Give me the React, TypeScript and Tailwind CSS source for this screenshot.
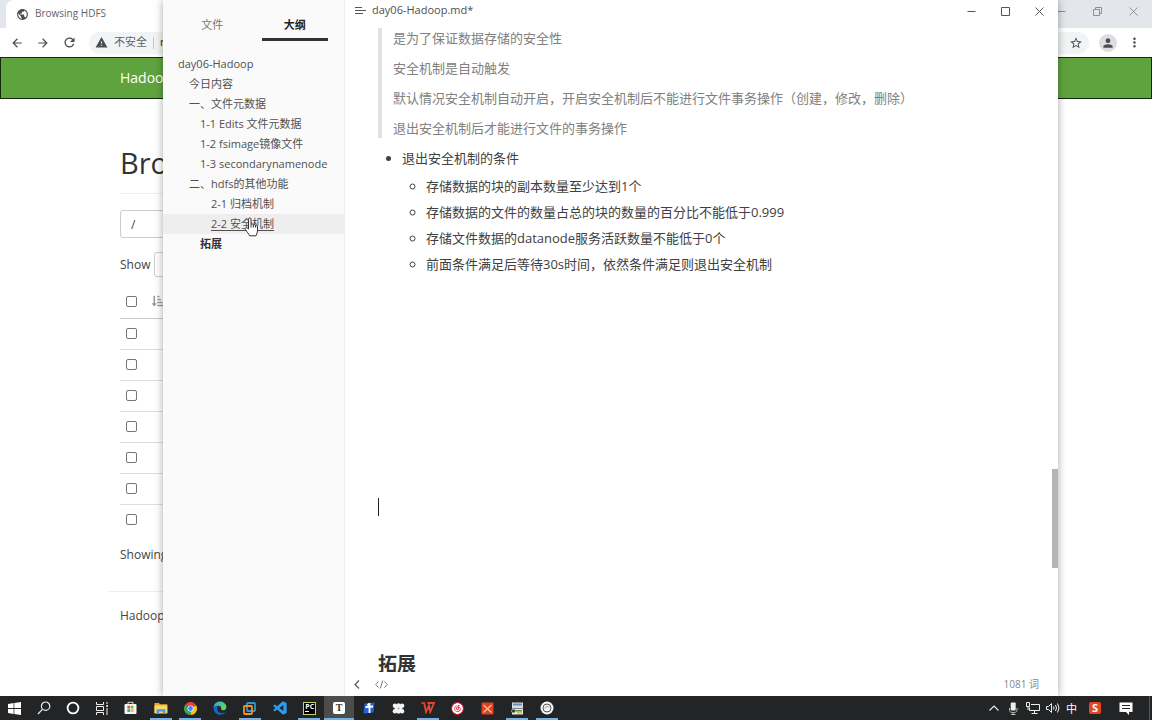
import React, { useState } from 'react';
import { MdArrowBack, MdArrowForward, MdRefresh, MdWarning, MdStarBorder, MdPerson, MdMoreVert, MdPublic } from 'react-icons/md';
import { FaSortAmountDownAlt } from 'react-icons/fa';
import { BiLogoVisualStudio } from 'react-icons/bi';
import { SiNeteasecloudmusic } from 'react-icons/si';

interface OutlineItem {
  text: string;
  indent: string;
  bold?: boolean;
}

interface TaskItem {
  name: string;
  icon: React.ReactNode;
  running?: boolean;
  active?: boolean;
}

const outline: OutlineItem[] = [
  { text: 'day06-Hadoop', indent: 'pl-[15px]' },
  { text: '今日内容', indent: 'pl-[26px]' },
  { text: '一、文件元数据', indent: 'pl-[26px]' },
  { text: '1-1 Edits 文件元数据', indent: 'pl-[37px]' },
  { text: '1-2 fsimage镜像文件', indent: 'pl-[37px]' },
  { text: '1-3 secondarynamenode', indent: 'pl-[37px]' },
  { text: '二、hdfs的其他功能', indent: 'pl-[26px]' },
  { text: '2-1 归档机制', indent: 'pl-[48px]' },
  { text: '2-2 安全机制', indent: 'pl-[48px]' },
  { text: '拓展', indent: 'pl-[37px]', bold: true },
];

const quotes = [
  '是为了保证数据存储的安全性',
  '安全机制是自动触发',
  '默认情况安全机制自动开启，开启安全机制后不能进行文件事务操作（创建，修改，删除）',
  '退出安全机制后才能进行文件的事务操作',
];

const conditions = [
  '存储数据的块的副本数量至少达到1个',
  '存储数据的文件的数量占总的块的数量的百分比不能低于0.999',
  '存储文件数据的datanode服务活跃数量不能低于0个',
  '前面条件满足后等待30s时间，依然条件满足则退出安全机制',
];

const systemItems: TaskItem[] = [
  {
    name: 'Start',
    icon: (
      <svg width="13" height="13" viewBox="0 0 13 13" fill="#fff">
        <path d="M0 1.9 5.6 1.1V6.1H0zM6.3 1 13 0V6.1H6.3zM0 6.9H5.6V11.9L0 11.1zM6.3 6.9H13V13L6.3 12z" />
      </svg>
    ),
  },
  {
    name: 'Search',
    icon: (
      <svg width="14" height="14" viewBox="0 0 14 14" fill="none" stroke="#eee" strokeWidth="1.2">
        <circle cx="8.6" cy="5.2" r="4.2" />
        <path d="M5.6 8.2 1 13" />
      </svg>
    ),
  },
  {
    name: 'Cortana',
    icon: (
      <svg width="14" height="14" viewBox="0 0 14 14" fill="none" stroke="#fff" strokeWidth="1.8">
        <circle cx="7" cy="7" r="5.4" />
      </svg>
    ),
  },
  {
    name: 'Task View',
    icon: (
      <svg width="14" height="13" viewBox="0 0 14 13" fill="none" stroke="#eee">
        <path d="M1.5 0V2.5H8.5V0M1.5 13V10.5H8.5V13M1.5 4.5H8.5V8.5H1.5zM12 0V2M12 6V13" />
        <rect x="11.3" y="3" width="1.6" height="2" fill="#eee" stroke="none" />
      </svg>
    ),
  },
];

const appItems: TaskItem[] = [
  {
    name: 'Store',
    icon: (
      <svg width="13" height="14" viewBox="0 0 13 14">
        <path d="M4 3.5V1.3H9V3.5" fill="none" stroke="#ddd" />
        <rect x="0.5" y="3" width="12" height="10" rx="1" fill="#f5f5f5" />
        <rect x="3.4" y="4.8" width="2.7" height="2.7" fill="#e8502e" />
        <rect x="6.8" y="4.8" width="2.7" height="2.7" fill="#7db83a" />
        <rect x="3.4" y="8.2" width="2.7" height="2.7" fill="#2a9ddf" />
        <rect x="6.8" y="8.2" width="2.7" height="2.7" fill="#f5b820" />
      </svg>
    ),
  },
  {
    name: 'Explorer',
    running: true,
    icon: (
      <svg width="14" height="13" viewBox="0 0 14 13">
        <path d="M0.5 1H5L6 2.3H13.3V11H0.5z" fill="#e9a928" />
        <path d="M0.5 3.4H13.3V11.5H0.5z" fill="#fbd66b" />
        <path d="M2.6 12V7.2H11.3V12H9V9.6H5V12z" fill="#4b9be0" />
      </svg>
    ),
  },
  {
    name: 'Chrome',
    running: true,
    icon: (
      <svg width="13" height="13" viewBox="0 0 24 24">
        <path d="M12 12 1.6 6A12 12 0 0 1 22.4 6z" fill="#ea4335" />
        <path d="M12 12 22.4 6A12 12 0 0 1 12 24z" fill="#fbc116" />
        <path d="M12 12V24A12 12 0 0 1 1.6 6z" fill="#34a853" />
        <circle cx="12" cy="12" r="5.6" fill="#fff" />
        <circle cx="12" cy="12" r="4.4" fill="#4285f4" />
      </svg>
    ),
  },
  {
    name: 'Edge',
    icon: (
      <svg width="14" height="14" viewBox="0 0 24 24">
        <defs>
          <linearGradient id="edge" x1="0" y1="0" x2="1" y2="0.4">
            <stop offset="0" stopColor="#2fa9e6" />
            <stop offset="1" stopColor="#5fd45a" />
          </linearGradient>
        </defs>
        <path d="M1 12C1 5 6 1 12 1S23 5.5 23 10.5C23 14 20 16 17 16S13.5 14.5 14 13C14.5 10 12 8 9 8S2 9.5 1 12z" fill="url(#edge)" />
        <path d="M1 12C2 9 6 7.5 9 8 6 10 6 20 14.5 20.5 17 20.7 20 19.5 21.5 18 19 22 16 23.5 12 23.5 5 23.5 1 18 1 12z" fill="#1768c4" />
      </svg>
    ),
  },
  {
    name: 'VMware',
    running: true,
    icon: (
      <svg width="13" height="13" viewBox="0 0 13 13" fill="none" strokeWidth="1.8">
        <rect x="4" y="1" width="8" height="8" rx="0.8" stroke="#2f96cf" />
        <rect x="1" y="4" width="8" height="8" rx="0.8" stroke="#f0921e" />
      </svg>
    ),
  },
  { name: 'VS Code', icon: <BiLogoVisualStudio size={16} color="#2a9df0" /> },
  {
    name: 'PyCharm',
    running: true,
    icon: (
      <span className="flex h-[13px] w-[13px] flex-col border border-[#c8d06a] bg-black pl-px text-[7px] leading-[8px] font-bold text-white">
        PC
        <span className="h-px w-1 bg-white" />
      </span>
    ),
  },
  {
    name: 'Typora',
    running: true,
    active: true,
    icon: (
      <span className="flex h-3 w-3 items-center justify-center rounded-[2px] bg-white font-['Liberation_Serif',serif] text-[10px] leading-3 font-bold text-[#333]">T</span>
    ),
  },
  {
    name: 'Xunfei',
    icon: (
      <svg width="12" height="12" viewBox="0 0 12 12">
        <path d="M1.5 1.5 11.5 0.5 10.5 10.5 0.5 11.5z" fill="#2463d8" />
        <path d="M6.5 1V11M2.5 5 10 4.5M6.5 1.5 4.5 3.5" stroke="#fff" strokeWidth="1.8" fill="none" />
      </svg>
    ),
  },
  {
    name: 'Flower',
    icon: (
      <svg width="13" height="13" viewBox="0 0 24 24" fill="#f2f2f2">
        <circle cx="12" cy="6" r="3.5" />
        <circle cx="12" cy="18" r="3.5" />
        <circle cx="5.5" cy="7" r="4.2" />
        <circle cx="18.5" cy="7" r="4.2" />
        <circle cx="5.5" cy="17" r="4.2" />
        <circle cx="18.5" cy="17" r="4.2" />
        <circle cx="12" cy="12" r="7" />
        <circle cx="12" cy="12" r="1.5" fill="#777" />
      </svg>
    ),
  },
  {
    name: 'WPS',
    running: true,
    icon: (
      <svg width="14" height="12" viewBox="0 0 14 12" fill="none" stroke="#e8432b" strokeWidth="1.8">
        <path d="M0.5 1.2H3.2L5 10 8 3.5 9.2 10 13 1H6.5" />
      </svg>
    ),
  },
  {
    name: 'Music',
    icon: (
      <span className="flex h-[13px] w-[13px] items-center justify-center rounded-full bg-[#e0142c]">
        <SiNeteasecloudmusic size={11} color="#fff" className="rounded-full" />
      </span>
    ),
  },
  {
    name: 'XMind',
    icon: (
      <svg width="13" height="13" viewBox="0 0 13 13">
        <rect x="0.5" y="0.5" width="12" height="12" rx="1" fill="#e2401f" />
        <path d="M2.5 3 10.5 10.5M10.5 3 2.5 10.5" stroke="#f7c9a8" strokeWidth="1.2" />
      </svg>
    ),
  },
  {
    name: 'Tools',
    running: true,
    icon: (
      <svg width="13" height="13" viewBox="0 0 13 13">
        <rect x="1" y="0.5" width="11" height="6" fill="#d8dde2" />
        <rect x="2" y="1.5" width="9" height="2" fill="#6b8fbd" />
        <rect x="1" y="7" width="11" height="5.5" fill="#e9e9e9" />
        <rect x="4" y="8" width="7" height="1.5" fill="#5c8d3a" />
        <rect x="6" y="10.2" width="5" height="1.3" fill="#d2b53c" />
        <circle cx="2.5" cy="9" r="2" fill="#333" stroke="#ddd" strokeWidth="0.6" />
      </svg>
    ),
  },
  {
    name: 'Recorder',
    running: true,
    icon: (
      <svg width="14" height="14" viewBox="0 0 14 14">
        <circle cx="7" cy="7" r="6.5" fill="#f4f4f4" />
        <circle cx="7" cy="7" r="4" fill="none" stroke="#555" />
        <path d="M5 7.5C5.5 5 8.5 5 9 6.5" fill="none" stroke="#888" />
      </svg>
    ),
  },
];

const TaskButton: React.FC<{ item: TaskItem }> = ({ item }) => (
  <button
    aria-label={item.name}
    className={`relative flex h-full flex-1 items-center justify-center ${item.active ? 'bg-[#4b4c4c]' : ''}`}
  >
    {item.icon}
    {item.running && <span className={`absolute bottom-0 h-0.5 bg-[#76b0e4] ${item.active ? 'w-full' : 'w-[22px]'}`} />}
  </button>
);

const WindowButtons: React.FC<{ restored?: boolean; className: string; cell: string }> = ({ restored, className, cell }) => (
  <div className={`flex ${className}`}>
    <button aria-label="Minimize" className={`flex h-[22px] items-center justify-center ${cell}`}>
      <svg width="9" height="9" viewBox="0 0 9 9" stroke="currentColor"><path d="M0.5 4.5H8.5" /></svg>
    </button>
    <button aria-label="Maximize" className={`flex h-[22px] items-center justify-center ${cell}`}>
      <svg width="9" height="9" viewBox="0 0 9 9" fill="none" stroke="currentColor">
        {restored ? <path d="M0.5 2.5H6.5V8.5H0.5zM2.5 2.5V0.5H8.5V6.5H6.5" /> : <path d="M0.5 0.5H8.5V8.5H0.5z" />}
      </svg>
    </button>
    <button aria-label="Close" className={`flex h-[22px] items-center justify-center ${cell}`}>
      <svg width="9" height="9" viewBox="0 0 9 9" stroke="currentColor"><path d="M0.5 0.5 8.5 8.5M8.5 0.5 0.5 8.5" /></svg>
    </button>
  </div>
);

const Browser: React.FC = () => (
  <div className="flex h-full flex-col bg-white text-xs text-[#444]">
    <div className="flex h-7 justify-between bg-[#e3e6ea] pr-px pl-1.5">
      <div className="flex w-[200px] items-center gap-1.5 rounded-t-lg bg-white pl-2.5 text-[10px] text-[#5f6368]">
        <MdPublic size={13} color="#4a4d51" />
        Browsing HDFS
      </div>
      <WindowButtons restored className="text-[#8e9092]" cell="w-9" />
    </div>
    <div className="flex h-[29px] items-center px-2.5 text-[#4a4d51]">
      <div className="flex gap-3 pr-3">
        <button aria-label="Back"><MdArrowBack size={14} /></button>
        <button aria-label="Forward"><MdArrowForward size={14} /></button>
        <button aria-label="Reload"><MdRefresh size={15} /></button>
      </div>
      <div className="flex h-[22px] flex-1 items-center rounded-full bg-[#f1f3f4] px-1.5 text-[11px] text-[#5f6368]">
        <MdWarning size={13} color="#4a4d51" />
        <span className="pl-1.5">不安全</span>
        <span className="mx-1.5 h-3 w-px bg-[#c4c6c9]" />
        <span className="flex-1 text-[#222]">node1</span>
        <button aria-label="Bookmark"><MdStarBorder size={14} color="#4a4d51" /></button>
      </div>
      <button aria-label="Profile" className="ml-2.5 flex h-[18px] w-[18px] items-center justify-center rounded-full bg-[#dcdee3]">
        <MdPerson size={14} />
      </button>
      <button aria-label="Menu" className="ml-2.5"><MdMoreVert size={15} /></button>
    </div>
    <nav className="flex h-[42px] items-center border border-[#14280c] bg-[#5fa33e] pl-[119px]">
      <a href="#" className="text-sm text-white">Hadoop</a>
    </nav>
    <main className="mx-[108px] flex-1 pt-11">
      <div className="px-3">
        <h1 className="border-b border-[#eee] pb-2.5 text-[29px] leading-10 text-[#333]">Bro</h1>
        <input aria-label="Directory" defaultValue="/" className="mt-4 block h-7 w-full rounded-[3px] border border-[#ccc] px-2.5" />
        <label className="mt-3.5 flex h-[25px] items-center gap-1">
          Show
          <select className="h-full w-[60px] appearance-none rounded-[3px] border border-[#ccc] px-2">
            <option>25</option>
          </select>
        </label>
        <table className="mt-2 w-full">
          <thead>
            <tr className="h-[33px] border-b border-[#c8c8c8]">
              <th className="w-7 pl-1.5 text-left">
                <input type="checkbox" aria-label="Select all" className="block h-[11px] w-[11px] appearance-none rounded-[2px] border border-[#767676]" />
              </th>
              <th className="pl-1 text-left"><FaSortAmountDownAlt size={12} color="#999" /></th>
            </tr>
          </thead>
          <tbody>
            {[1, 2, 3, 4, 5, 6, 7].map(n => (
              <tr key={n} className="h-[31px] border-b border-[#ddd] last:border-0">
                <td className="pl-1.5">
                  <input type="checkbox" aria-label={`Select row ${n}`} className="block h-[11px] w-[11px] appearance-none rounded-[2px] border border-[#767676]" />
                </td>
                <td />
              </tr>
            ))}
          </tbody>
        </table>
        <p className="mt-2.5 leading-5">Showing</p>
      </div>
      <footer className="mt-[26px] border-t border-[#eee] px-3 pt-3.5 leading-5">Hadoop</footer>
    </main>
  </div>
);

const Editor: React.FC = () => {
  const [tab, setTab] = useState('大纲');
  const hovered = '2-2 安全机制';

  return (
    <div className="absolute inset-y-0 right-[94px] left-[163px] flex bg-white text-[#404040] shadow-[0_0_8px_rgba(0,0,0,0.35)]">
      <aside className="w-[182px] border-r border-[#eee] bg-[#fafafa]">
        <div className="flex gap-4 px-4 pt-3">
          {['文件', '大纲'].map(t => (
            <button
              key={t}
              onClick={() => setTab(t)}
              className={`h-[29px] flex-1 border-b-[3px] text-[11px] ${t === tab ? 'border-[#333] font-bold text-[#222]' : 'border-transparent text-[#777]'}`}
            >
              {t}
            </button>
          ))}
        </div>
        <ul className="pt-[13px] text-[11px] leading-5 text-[#505050]">
          {outline.map(item => (
            <li key={item.text} className={`relative ${item.indent} ${item.text === hovered ? 'bg-[#eee]' : ''}`}>
              <a href="#" className={`${item.bold ? 'font-bold text-[#333]' : ''} ${item.text === hovered ? 'underline underline-offset-2' : ''}`}>
                {item.text}
              </a>
              {item.text === hovered && (
                <svg className="absolute top-[3px] left-[81px]" width="15" height="21" viewBox="0 0 15 21">
                  <path
                    d="M4.5 12V2.2C4.5 0.5 7 0.5 7 2.2V7.5C7.5 6.5 9.2 6.7 9.3 8 9.9 7.2 11.4 7.5 11.5 8.8 12.2 8.3 13.5 8.8 13.5 10V14C13.5 16 12.3 17 12 18.8H5.5C5 16.8 2.6 14.8 1.3 12.3 0.6 11 2.4 10 3.3 11z"
                    fill="#fff"
                    stroke="#333"
                  />
                  <path d="M7 7.5V10.5M9.3 8V10.5M11.5 8.8V10.5" stroke="#333" fill="none" />
                </svg>
              )}
            </li>
          ))}
        </ul>
      </aside>
      <div className="flex min-w-0 flex-1 flex-col">
        <header className="flex h-[22px] shrink-0 items-start justify-between pr-[3px] pl-2.5">
          <div className="flex items-center gap-1.5 text-[11px] leading-5 text-[#505050]">
            <svg width="11" height="9" viewBox="0 0 11 9" stroke="#555"><path d="M0 1.5H7M0 4.5H11M0 7.5H8" /></svg>
            day06-Hadoop.md*
          </div>
          <WindowButtons className="text-[#555]" cell="w-[34px] pl-0.5" />
        </header>
        <div className="flex min-h-0 flex-1">
          <article className="min-w-0 flex-1 overflow-hidden pt-1.5 pl-[33px] text-[13px] leading-5">
            <blockquote className="flex flex-col gap-2.5 border-l-4 border-[#dfe2e5] pl-[11px] text-[#808080]">
              {quotes.map(q => <p key={q}>{q}</p>)}
            </blockquote>
            <ul className="mt-2.5 list-disc pl-6">
              <li>
                退出安全机制的条件
                <ul className="mt-2 flex list-[circle] flex-col gap-1.5 pl-6">
                  {conditions.map(c => <li key={c}>{c}</li>)}
                </ul>
              </li>
            </ul>
            <div className="mt-56 h-[18px] w-px bg-[#222]" />
            <h3 className="mt-[134px] text-[19px] leading-7 font-bold text-[#333]">拓展</h3>
          </article>
          <div className="mt-[447px] h-[99px] w-1.5 bg-[#b5b5b5]" />
        </div>
        <footer className="flex h-6 shrink-0 items-center pr-[19px] pl-2 text-[10px] text-[#888]">
          <button aria-label="Hide sidebar">
            <svg width="8" height="9" viewBox="0 0 8 9" fill="none" stroke="#555" strokeWidth="1.2"><path d="M6 0.5 2 4.5 6 8.5" /></svg>
          </button>
          <button aria-label="Source mode" className="ml-3.5">
            <svg width="13" height="9" viewBox="0 0 13 9" fill="none" stroke="#777"><path d="M3.5 1.5 0.7 4.5 3.5 7.5M9.5 1.5 12.3 4.5 9.5 7.5M7.7 0.5 5.3 8.5" /></svg>
          </button>
          <span className="ml-auto">1081 词</span>
        </footer>
      </div>
    </div>
  );
};

const Taskbar: React.FC = () => (
  <div className="flex h-6 shrink-0 bg-[#222425] text-white">
    <div className="flex w-[116px]">
      {systemItems.map(item => <TaskButton key={item.name} item={item} />)}
    </div>
    <div className="flex w-[446px]">
      {appItems.map(item => <TaskButton key={item.name} item={item} />)}
    </div>
    <div className="ml-auto flex items-center gap-1.5 pr-0.5">
      <svg width="12" height="12" viewBox="0 0 12 12" fill="none" stroke="#eee" strokeWidth="1.1"><path d="M1.5 8.5 6 4 10.5 8.5" /></svg>
      <svg className="mx-px" width="12" height="13" viewBox="0 0 12 13" fill="#eee">
        <rect x="3.7" y="0.5" width="5" height="8" rx="1" />
        <path d="M2.5 6V8.5C2.5 10 4 10.5 6.2 10.5S10 10 10 8.5V6M6.2 10.5V12.5M4 12.5H8.5" fill="none" stroke="#bbb" />
      </svg>
      <svg width="14" height="12" viewBox="0 0 14 12" fill="none" stroke="#eee"><path d="M5 2.5H13.5V8.5H3.5V5.5M8.5 8.5V11M5.5 11.5H11.5M0.5 0.5H3.5V4.5H0.5zM2 4.5V8" /></svg>
      <svg width="14" height="12" viewBox="0 0 14 12" fill="none" stroke="#eee"><path d="M0.5 4.5H2.5L5.5 1.5V10.5L2.5 7.5H0.5zM7.5 4.5Q8.5 6 7.5 7.5M9.5 3Q11.5 6 9.5 9M11.5 1.5Q14.5 6 11.5 10.5" /></svg>
      <span className="text-[11px] leading-none">中</span>
      <span className="ml-1.5 flex h-3 w-3 items-center justify-center rounded-[2px] bg-[#e5451f] text-[11px] leading-3 font-bold">S</span>
      <svg className="mr-2.5 ml-3" width="14" height="13" viewBox="0 0 14 13">
        <path d="M0.5 0.5H13.5V10H10V13L7 10H0.5z" fill="#fff" />
        <path d="M3 3.5H11M3 6.5H11" stroke="#222425" />
      </svg>
      <span className="h-6 w-px bg-[#555]" />
    </div>
  </div>
);

const App: React.FC = () => (
  <div className="flex h-screen flex-col overflow-hidden font-['Open_Sans','Noto_Sans_CJK_SC',sans-serif]">
    <div className="relative min-h-0 flex-1 overflow-hidden">
      <Browser />
      <Editor />
    </div>
    <Taskbar />
  </div>
);

export default App;
